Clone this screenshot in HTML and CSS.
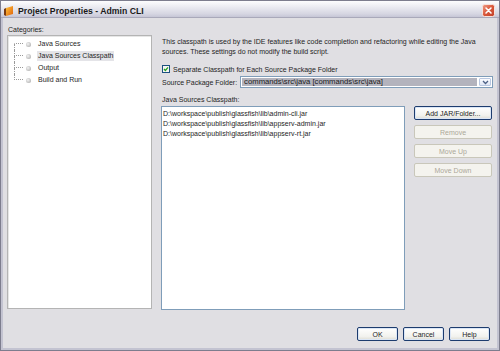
FILE: index.html
```html
<!DOCTYPE html>
<html lang="en">
<head>
    <meta charset="UTF-8">
    <title>Project Properties - Admin CLI</title>
    <link rel="stylesheet" href="styles.css">
</head>
<body>
    <div class="window">
        <div class="titlebar">
            <svg class="app-icon" width="9" height="10" viewBox="0 0 9 10">
                <defs>
                    <linearGradient id="ico" x1="0" y1="0" x2="1" y2="1">
                        <stop offset="0" stop-color="#ffc23a"/>
                        <stop offset="1" stop-color="#e0620c"/>
                    </linearGradient>
                </defs>
                <polygon points="2,2 9,0 9,8 2,10" fill="url(#ico)"/>
                <polygon points="0,3 2,2 2,10 0,9" fill="#7a3b12"/>
            </svg>
            <span class="title">Project Properties - Admin CLI</span>
            <svg class="close" width="13" height="13" viewBox="0 0 13 13">
                <defs>
                    <linearGradient id="cls" x1="0" y1="0" x2="1" y2="1">
                        <stop offset="0" stop-color="#f0a08c"/>
                        <stop offset="0.5" stop-color="#d9573a"/>
                        <stop offset="1" stop-color="#c0402a"/>
                    </linearGradient>
                </defs>
                <rect x="0.5" y="0.5" width="12" height="12" rx="2" fill="url(#cls)" stroke="#f6e2dc"/>
                <path d="M4 4 L9 9 M9 4 L4 9" stroke="#ffffff" stroke-width="1.6" stroke-linecap="round"/>
            </svg>
        </div>

        <div class="body">
            <div class="main">
                <div class="categories">
                    <div class="label">Categories:</div>
                    <div class="tree">
                        <div class="node first"><span class="twig"></span><span class="dot"></span><span class="name">Java Sources</span></div>
                        <div class="node"><span class="twig"></span><span class="dot"></span><span class="name selected">Java Sources Classpath</span></div>
                        <div class="node"><span class="twig"></span><span class="dot"></span><span class="name">Output</span></div>
                        <div class="node last"><span class="twig"></span><span class="dot"></span><span class="name">Build and Run</span></div>
                    </div>
                </div>

                <div class="panel">
                    <div class="desc">This classpath is used by the IDE features like code completion and refactoring while editing the Java sources. These settings do not modify the build script.</div>

                    <div class="check-row">
                        <svg class="checkbox" width="8" height="8" viewBox="0 0 8 8">
                            <rect x="0.5" y="0.5" width="7" height="7" fill="#f6f6f2" stroke="#1c5180"/>
                            <path d="M2 4 L3.4 5.5 L6 2.4" fill="none" stroke="#21a121" stroke-width="1.3"/>
                        </svg>
                        <span>Separate Classpath for Each Source Package Folder</span>
                    </div>

                    <div class="folder-row">
                        <span>Source Package Folder:</span>
                        <div class="combo">
                            <span class="combo-text">commands\src\java [commands\src\java]</span>
                            <span class="combo-btn">
                                <svg width="7" height="5" viewBox="0 0 7 5">
                                    <path d="M1 1 L3.5 3.5 L6 1" fill="none" stroke="#4d6185" stroke-width="1.3"/>
                                </svg>
                            </span>
                        </div>
                    </div>

                    <div class="list-label">Java Sources Classpath:</div>
                    <div class="list-row">
                        <div class="list">
                            <div class="item">D:\workspace\publish\glassfish\lib\admin-cli.jar</div>
                            <div class="item">D:\workspace\publish\glassfish\lib\appserv-admin.jar</div>
                            <div class="item">D:\workspace\publish\glassfish\lib\appserv-rt.jar</div>
                        </div>
                        <div class="side-buttons">
                            <button class="btn">Add JAR/Folder...</button>
                            <button class="btn" disabled>Remove</button>
                            <button class="btn" disabled>Move Up</button>
                            <button class="btn" disabled>Move Down</button>
                        </div>
                    </div>
                </div>
            </div>

            <div class="footer">
                <button class="btn">OK</button>
                <button class="btn">Cancel</button>
                <button class="btn">Help</button>
            </div>
        </div>
    </div>
</body>
</html>
```

FILE: styles.css
```css
html, body {
    margin: 0;
    padding: 0;
}
body {
    width: 500px;
    height: 351px;
    overflow: hidden;
    font-family: "Liberation Sans", Arial, sans-serif;
    font-size: 7px;
    color: #1e1e1e;
}
.window {
    width: 500px;
    height: 351px;
    box-sizing: border-box;
    border: 1px solid #7d7d8e;
    background: #c3c3d1;
    display: flex;
    flex-direction: column;
}
.titlebar {
    height: 16px;
    border-bottom: 1px solid #a9a9ba;
    background: linear-gradient(#fdfdfe 0%, #ececf2 35%, #d6d6e2 80%, #c6c6d6 100%);
    display: flex;
    align-items: center;
    padding: 1px 3px 0 3px;
}
.app-icon {
    margin-right: 5px;
    margin-top: 2px;
}
.title {
    font-weight: bold;
    font-size: 8.7px;
    color: #1a1a1a;
    margin-top: 2px;
}
.close {
    margin-left: auto;
    margin-top: 2px;
    margin-right: 1px;
}
.body {
    margin: 0 2px 2px 2px;
    height: 330px;
    box-sizing: border-box;
    background: #e0dfe3;
    padding: 7px 4px 7px 4px;
    display: flex;
    flex-direction: column;
}
.main {
    height: 285px;
    display: flex;
}
.categories {
    width: 145px;
    display: flex;
    flex-direction: column;
}
.label {
    height: 10px;
    line-height: 10px;
    padding-left: 1px;
}
.tree {
    flex: 1;
    margin-bottom: 1px;
    background: #fff;
    border: 1px solid #b4b4b4;
    box-shadow: inset 1px 1px 0 #e6e6e6;
    padding-top: 2px;
}
.node {
    height: 12px;
    display: flex;
    align-items: center;
}
.twig {
    width: 9px;
    height: 12px;
    margin-left: 6px;
    display: flex;
    flex-direction: column;
}
.twig::before,
.twig::after {
    content: "";
    display: block;
    height: 6px;
    border-left: 1px dotted #9a9a9a;
}
.twig::before {
    height: 5px;
    border-bottom: 1px dotted #9a9a9a;
}
.node.first .twig::before {
    border-left-color: transparent;
}
.node.last .twig::after {
    border-left-color: transparent;
}
.dot {
    width: 5px;
    height: 5px;
    margin-left: 3px;
    border-radius: 50%;
    background: radial-gradient(circle at 40% 40%, #f4f4f4 0%, #c4c4c4 60%, #8e8e8e 100%);
}
.name {
    margin-left: 6px;
    padding: 0 1px;
    line-height: 10px;
}
.name.selected {
    background: #e4e4e8;
}
.panel {
    flex: 1;
    margin-left: 9px;
    display: flex;
    flex-direction: column;
}
.desc {
    margin-top: 12px;
    padding-left: 1px;
    line-height: 10px;
}
.check-row {
    margin-top: 7px;
    height: 10px;
    padding-left: 1px;
    display: flex;
    align-items: center;
    gap: 3px;
}
.folder-row {
    margin-top: 2px;
    padding-left: 1px;
    display: flex;
    align-items: center;
    gap: 3px;
}
.combo {
    flex: 1;
    height: 12px;
    box-sizing: border-box;
    border: 1px solid #7f9db9;
    background: #fff;
    display: flex;
    align-items: stretch;
}
.combo-text {
    flex: 1;
    margin: 1px;
    padding-left: 2px;
    background: #b3b3bd;
    color: #1a1a1a;
    font-size: 7.7px;
    line-height: 8px;
}
.combo-btn {
    width: 12px;
    margin: 1px;
    box-sizing: border-box;
    border: 1px solid #b9c7e0;
    border-radius: 1px;
    background: linear-gradient(#fbfcff, #dfe6f4);
    display: flex;
    align-items: center;
    justify-content: center;
}
.list-label {
    margin-top: 7px;
    padding-left: 1px;
    height: 10px;
    line-height: 10px;
}
.list-row {
    flex: 1;
    margin-top: 1px;
    display: flex;
    gap: 9px;
}
.list {
    width: 244px;
    box-sizing: border-box;
    background: #fff;
    border: 1px solid #7f9db9;
    padding-top: 2px;
}
.item {
    height: 10px;
    line-height: 10px;
    padding-left: 1px;
}
.side-buttons {
    width: 78px;
    display: flex;
    flex-direction: column;
    gap: 5px;
}
.btn {
    height: 14px;
    margin: 0;
    padding: 0;
    box-sizing: border-box;
    font-family: inherit;
    font-size: 7px;
    color: #1e1e1e;
    border: 1px solid #1d3c6e;
    border-radius: 2px;
    background: linear-gradient(#ffffff, #f2f2ee 70%, #dddcd4);
    box-shadow: inset 0 0 0 1px #dbe6f6;
}
.btn:disabled {
    color: #aca899;
    border-color: #c9c7ba;
    background: #f4f3ee;
    box-shadow: none;
}
.footer {
    margin-top: 17px;
    margin-right: 3px;
    display: flex;
    justify-content: flex-end;
    gap: 5px;
}
.footer .btn {
    width: 41px;
}
```
